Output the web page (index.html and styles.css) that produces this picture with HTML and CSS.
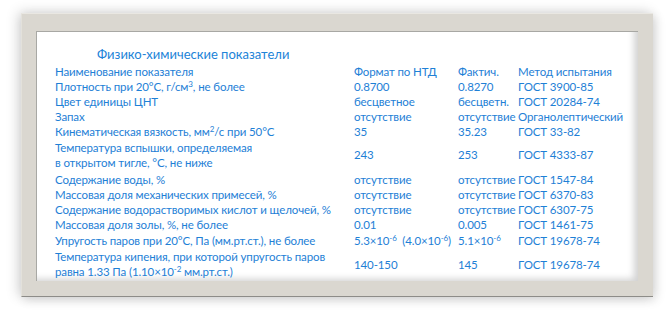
FILE: index.html
```html
<!DOCTYPE html>
<html lang="ru">
<head>
<meta charset="utf-8">
<link rel="stylesheet" href="styles.css">
</head>
<body>
<div class="frame">
  <div class="panel">
    <div class="title">Физико-химические показатели</div>
    <div class="table">
      <div class="row"><span>Наименование показателя</span><span>Формат по НТД</span><span>Фактич.</span><span>Метод испытания</span></div>
      <div class="row"><span>Плотность при 20°C, г/см<sup>3</sup>, не более</span><span>0.8700</span><span>0.8270</span><span>ГОСТ 3900-85</span></div>
      <div class="row"><span>Цвет единицы ЦНТ</span><span>бесцветное</span><span>бесцветн.</span><span>ГОСТ 20284-74</span></div>
      <div class="row"><span>Запах</span><span>отсутствие</span><span>отсутствие</span><span>Органолептический</span></div>
      <div class="row"><span>Кинематическая вязкость, мм<sup>2</sup>/с при 50°C</span><span>35</span><span>35.23</span><span>ГОСТ 33-82</span></div>
      <div class="row two"><span>Температура вспышки, определяемая<br>в открытом тигле, °C, не ниже</span><span>243</span><span>253</span><span>ГОСТ 4333-87</span></div>
      <div class="row"><span>Содержание воды, %</span><span>отсутствие</span><span>отсутствие</span><span>ГОСТ 1547-84</span></div>
      <div class="row"><span>Массовая доля механических примесей, %</span><span>отсутствие</span><span>отсутствие</span><span>ГОСТ 6370-83</span></div>
      <div class="row"><span>Содержание водорастворимых кислот и щелочей, %</span><span>отсутствие</span><span>отсутствие</span><span>ГОСТ 6307-75</span></div>
      <div class="row"><span>Массовая доля золы, %, не более</span><span>0.01</span><span>0.005</span><span>ГОСТ 1461-75</span></div>
      <div class="row tall"><span>Упругость паров при 20°C, Па (мм.рт.ст.), не более</span><span class="nowrap">5.3×10<sup>-6</sup>&nbsp;&nbsp;(4.0×10<sup>-6</sup>)</span><span>5.1×10<sup>-6</sup></span><span>ГОСТ 19678-74</span></div>
      <div class="row two last"><span>Температура кипения, при которой упругость паров<br>равна 1.33 Па (1.10×10<sup>-2</sup> мм.рт.ст.)</span><span>140-150</span><span>145</span><span>ГОСТ 19678-74</span></div>
    </div>
  </div>
</div>
</body>
</html>
```
FILE: styles.css
```css
html, body {
  margin: 0;
  padding: 0;
  background: #ffffff;
}
body {
  width: 666px;
  height: 312px;
  overflow: hidden;
  font-family: Lato, "Noto Sans", sans-serif;
  color: #1e80d6;
}
.frame {
  margin: 13px 0 0 21px;
  width: 632px;
  height: 284px;
  box-sizing: border-box;
  padding: 17px 15px 15px 14px;
  background: #dad7d0;
  border-top: 1px solid #e9e7e2;
  border-left: 1px solid #e3e1db;
  border-bottom: 1px solid #8d8c88;
  box-shadow: -3px -1px 12px rgba(0, 0, 0, 0.16), 3px 3px 10px rgba(0, 0, 0, 0.12);
}
.panel {
  height: 100%;
  box-sizing: border-box;
  background: #ffffff;
  padding: 14px 0 0 19px;
  box-shadow: inset 1px 1px 0 #a8a8a4, inset -9px -7px 7px -5px rgba(0, 0, 0, 0.18);
}
.title {
  font-size: 13px;
  line-height: 19px;
  padding-left: 42px;
  color: #2183d8;
}
.table {
  font-size: 11.5px;
  letter-spacing: -0.12px;
}
.row {
  display: grid;
  grid-template-columns: 299px 104px 60px 1fr;
  align-items: center;
  height: 15px;
  line-height: 15px;
  white-space: nowrap;
}
.row.two {
  height: 33px;
  padding-bottom: 2px;
  box-sizing: border-box;
}
.row.tall {
  height: 16px;
}
.row.last {
  height: 31px;
  padding-bottom: 0;
  padding-top: 1px;
}
sup {
  font-size: 8px;
  line-height: 0;
  vertical-align: 4px;
}
.nowrap {
  white-space: nowrap;
}
```
